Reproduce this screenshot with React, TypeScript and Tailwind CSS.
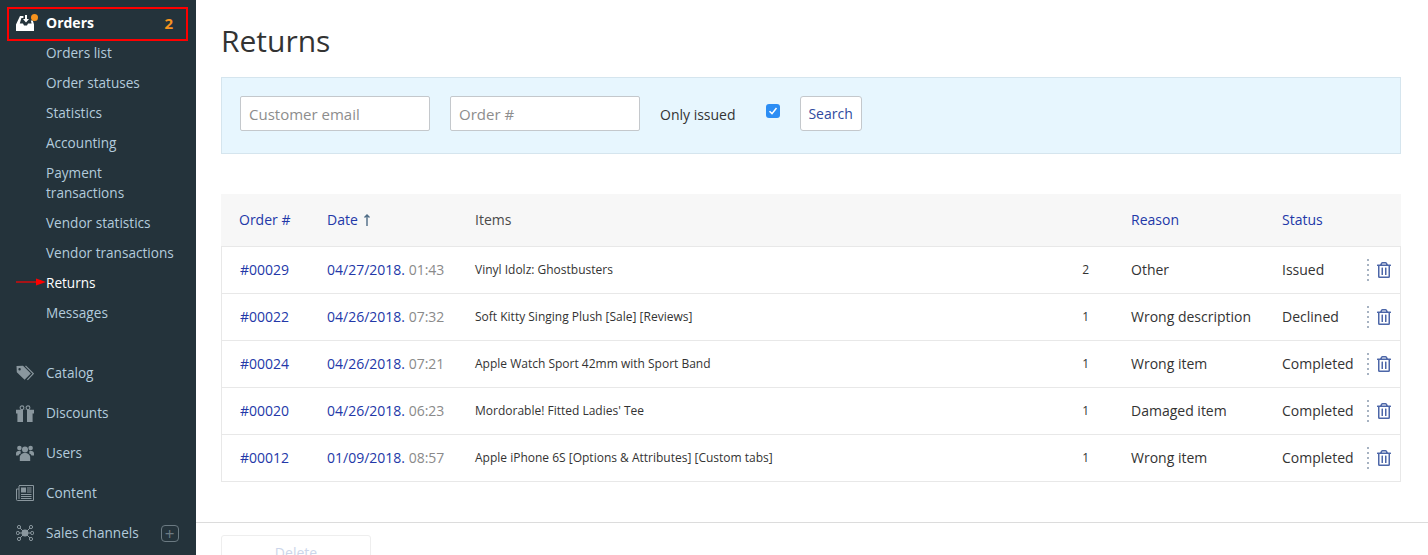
import { FaRegTrashAlt } from "react-icons/fa";

const subItems = [
  { label: "Orders list" },
  { label: "Order statuses" },
  { label: "Statistics" },
  { label: "Accounting" },
  { label: "Payment transactions", wrap: true },
  { label: "Vendor statistics" },
  { label: "Vendor transactions" },
  { label: "Returns", active: true },
  { label: "Messages" },
];

const rows = [
  { id: "#00029", date: "04/27/2018.", time: "01:43", item: "Vinyl Idolz: Ghostbusters", qty: "2", reason: "Other", status: "Issued" },
  { id: "#00022", date: "04/26/2018.", time: "07:32", item: "Soft Kitty Singing Plush [Sale] [Reviews]", qty: "1", reason: "Wrong description", status: "Declined" },
  { id: "#00024", date: "04/26/2018.", time: "07:21", item: "Apple Watch Sport 42mm with Sport Band", qty: "1", reason: "Wrong item", status: "Completed" },
  { id: "#00020", date: "04/26/2018.", time: "06:23", item: "Mordorable! Fitted Ladies' Tee", qty: "1", reason: "Damaged item", status: "Completed" },
  { id: "#00012", date: "01/09/2018.", time: "08:57", item: "Apple iPhone 6S [Options & Attributes] [Custom tabs]", qty: "1", reason: "Wrong item", status: "Completed" },
];

const iconGray = "#8a979e";

function OrdersIcon() {
  return (
    <svg className="block" width="18" height="16" viewBox="0 0 18 16" aria-hidden>
      <path d="M4 1h3.4v2H5.4L3.8 8.6H7l1 2h3l1-2h3.6l-.8-3h2L18 9.6V16H0V9.6z" fill="#fff" />
      <path d="M9 0h2v4h2l-3 3.6L7 4h2z" fill="#fff" />
    </svg>
  );
}

function TagIcon() {
  return (
    <svg className="block" width="18" height="16" viewBox="0 0 18 16" aria-hidden>
      <path
        fillRule="evenodd"
        d="M0.5 1 7 .8 14.8 8.6 8.6 14.8 0.8 7.2zM3.6 3a1.2 1.2 0 1 0 0 2.4 1.2 1.2 0 0 0 0-2.4z"
        fill={iconGray}
      />
      <path d="M9.5 .8 17.3 8.6 11.4 14.8" fill="none" stroke={iconGray} strokeWidth="1.2" />
    </svg>
  );
}

function GiftIcon() {
  return (
    <svg className="block" width="18" height="17" viewBox="0 0 18 17" aria-hidden>
      <circle cx="6" cy="2.8" r="1.9" fill="none" stroke={iconGray} strokeWidth="1.1" />
      <circle cx="12" cy="2.8" r="1.9" fill="none" stroke={iconGray} strokeWidth="1.1" />
      <path d="M0 4.8h18v3.6H16.6V17H1.4V8.4H0z" fill={iconGray} />
      <path d="M7 4.8h4V17H7z" fill="#24333b" />
    </svg>
  );
}

function UsersIcon() {
  return (
    <svg className="block" width="18" height="16" viewBox="0 0 18 16" fill={iconGray} aria-hidden>
      <circle cx="9" cy="4.4" r="3" />
      <circle cx="3.4" cy="3" r="2.3" />
      <circle cx="14.6" cy="3" r="2.3" />
      <path d="M3.8 16v-3.4C3.8 9.8 6 8 9 8s5.2 1.8 5.2 4.6V16z" />
      <path d="M0 10.6V8.4C0 6.8 1.4 5.8 3.4 5.8c.8 0 1.3.2 1.3.2-.3 1-.1 1.5.3 2.2-1.4.5-2.3 1.4-2.5 2.4z" />
      <path d="M18 10.6V8.4c0-1.6-1.4-2.6-3.4-2.6-.8 0-1.3.2-1.3.2.3 1 .1 1.5-.3 2.2 1.4.5 2.3 1.4 2.5 2.4z" />
    </svg>
  );
}

function NewsIcon() {
  return (
    <svg className="block" width="18" height="16" viewBox="0 0 18 16" fill="none" stroke={iconGray} aria-hidden>
      <path d="M3 .5h14.5v15H1.5a1 1 0 0 1-1-1V4h2.5" />
      <path d="M3 1v13" />
      <path d="M5 2.5h5v5H5z" fill={iconGray} stroke="none" />
      <path d="M11 3h4.5M11 5h4.5M11 7h4.5M5 9.5h10.5M5 11.5h10.5M5 13.5h10.5" strokeWidth="1" />
    </svg>
  );
}

function SalesIcon() {
  const nodes = [
    [3, 3],
    [15, 3],
    [1.8, 9],
    [16.2, 9],
    [3, 15],
    [15, 15],
  ];
  return (
    <svg className="block" width="18" height="18" viewBox="0 0 18 18" fill="none" stroke={iconGray} strokeWidth="1" aria-hidden>
      {nodes.map(([x, y]) => (
        <g key={`${x}-${y}`}>
          <line x1="9" y1="9" x2={x} y2={y} />
          <circle cx={x} cy={y} r="1.6" fill="#24333b" />
        </g>
      ))}
      <circle cx="9" cy="9" r="3.4" fill={iconGray} stroke="none" />
    </svg>
  );
}

function Sidebar() {
  return (
    <aside className="w-[196px] shrink-0 bg-[#24333b] pt-2 text-[13.6px] leading-5 text-[#b3cbdc]">
      <div className="flex h-[30px] items-center pl-[16px] pr-[23px] text-[14px] font-bold text-white">
        <span className="relative w-[30px]">
          <OrdersIcon />
          <span className="absolute left-[15px] top-[-1px] h-[7px] w-[7px] rounded-full bg-[#f7931e]" />
        </span>
        <span className="flex-1">Orders</span>
        <span className="text-[15px] text-[#f7931e]">2</span>
      </div>
      {subItems.map((item) => (
        <div
          key={item.label}
          className={`relative py-[5px] pl-[46px] ${item.wrap ? "pr-[60px]" : "pr-2"} ${item.active ? "text-white" : ""}`}
        >
          {item.label}
          {item.active && (
            <svg className="absolute left-[16px] top-[9px]" width="30" height="10" viewBox="0 0 30 10" aria-hidden>
              <path d="M0 5h20" stroke="#f00" strokeWidth="1.2" />
              <path d="M20 1.5 30 5 20 8.5z" fill="#f00" />
            </svg>
          )}
        </div>
      ))}
      <div className="mt-[25px] flex flex-col">
        <div className="flex h-[40px] items-center pl-[16px]">
          <span className="w-[30px]"><TagIcon /></span>Catalog
        </div>
        <div className="flex h-[40px] items-center pl-[16px]">
          <span className="w-[30px]"><GiftIcon /></span>Discounts
        </div>
        <div className="flex h-[40px] items-center pl-[16px]">
          <span className="w-[30px]"><UsersIcon /></span>Users
        </div>
        <div className="flex h-[40px] items-center pl-[16px]">
          <span className="w-[30px]"><NewsIcon /></span>Content
        </div>
        <div className="flex h-[40px] items-center pl-[16px]">
          <span className="w-[30px]"><SalesIcon /></span>Sales channels
          <span className="ml-[22px] flex h-[17px] w-[18px] items-center justify-center rounded-[4px] border border-[#6b7a82] text-[17px] leading-none text-[#6b7a82]">+</span>
        </div>
      </div>
    </aside>
  );
}

function FilterBar() {
  return (
    <div className="ml-[25px] mr-[27px] mt-[16px] flex h-[77px] items-center border border-[#d5e5ee] bg-[#e7f6fe] pb-[4px] pl-[18px]">
      <input
        className="h-[35px] w-[190px] rounded-[2px] border border-[#c4c8cc] bg-white px-2 text-[15px] text-[#333] placeholder:text-[#8d8d8d]"
        placeholder="Customer email"
      />
      <input
        className="ml-[20px] h-[35px] w-[190px] rounded-[2px] border border-[#c4c8cc] bg-white px-2 text-[15px] text-[#333] placeholder:text-[#8d8d8d]"
        placeholder="Order #"
      />
      <span className="ml-[20px] mt-[2px] text-[14px] text-[#333]">Only issued</span>
      <span className="mb-[5px] ml-[30px] flex h-[14px] w-[14px] items-center justify-center rounded-[3px] bg-[#2c8df4]">
        <svg width="10" height="10" viewBox="0 0 10 10" fill="none" stroke="#fff" strokeWidth="1.5" aria-hidden>
          <path d="M1.5 5.2 4 7.6 8.5 2" />
        </svg>
      </span>
      <button className="ml-[20px] h-[35px] w-[62px] rounded-[3px] border border-[#c4c8cc] bg-white text-[14px] text-[#2f4a9e]">
        Search
      </button>
    </div>
  );
}

function ReturnsTable() {
  return (
    <div className="ml-[25px] mr-[27px] mt-[40px] text-[14px]">
      <div className="grid h-[52px] grid-cols-[88px_148px_656px_151px_1fr] items-center bg-[#f7f7f7] pb-[1px] pl-[18px] text-[#2338a8]">
        <span>Order #</span>
        <span className="flex items-center gap-[5px]">
          Date
          <svg width="8" height="12" viewBox="0 0 8 12" fill="none" stroke="#4d6b85" strokeWidth="1.4" aria-hidden>
            <path d="M4 12V1M1.5 3.5 4 1l2.5 2.5" />
          </svg>
        </span>
        <span className="text-[#4a4a4a]">Items</span>
        <span>Reason</span>
        <span>Status</span>
      </div>
      <div className="border-x border-t border-[#e8e8e8]">
        {rows.map((row) => (
          <div
            key={row.id}
            className="grid h-[47px] grid-cols-[87px_148px_606px_50px_151px_86px_1fr] items-center border-b border-[#e8e8e8] pl-[18px] text-[#333]"
          >
            <span className="pb-[2px] text-[#2338a8]">{row.id}</span>
            <span className="whitespace-nowrap pb-[2px] text-[#2338a8]">
              {row.date} <span className="text-[#8a8a8a]">{row.time}</span>
            </span>
            <span className="text-[12px]">{row.item}</span>
            <span className="pr-[42px] text-right text-[12px]">{row.qty}</span>
            <span className="pb-[2px]">{row.reason}</span>
            <span className="pb-[2px]">{row.status}</span>
            <span className="-ml-[1px] flex items-center">
              <span className="flex flex-col gap-[3px]">
                {[0, 1, 2, 3, 4].map((dot) => (
                  <span key={dot} className="h-[2px] w-[2px] bg-[#a7b3c2]" />
                ))}
              </span>
              <FaRegTrashAlt className="ml-[7px] text-[#4c66a8]" size={16} />
            </span>
          </div>
        ))}
      </div>
    </div>
  );
}

export default function App() {
  return (
    <div className="relative flex h-[555px] overflow-hidden bg-white font-['Open_Sans',sans-serif]">
      <Sidebar />
      <main className="min-w-0 flex-1">
        <h1 className="ml-[25px] mt-[21px] text-[30px] leading-[40px] text-[#333]">Returns</h1>
        <FilterBar />
        <ReturnsTable />
        <div className="mt-[40px] border-t border-[#dcdcdc] pl-[25px] pt-[12px]">
          <button className="h-[35px] w-[150px] rounded-[3px] border border-[#eeeeee] text-[14px] text-[#ccd6ea]">
            Delete
          </button>
        </div>
      </main>
      <div className="absolute left-[7px] top-[7px] h-[34px] w-[181px] border-2 border-[#f00]" />
    </div>
  );
}
